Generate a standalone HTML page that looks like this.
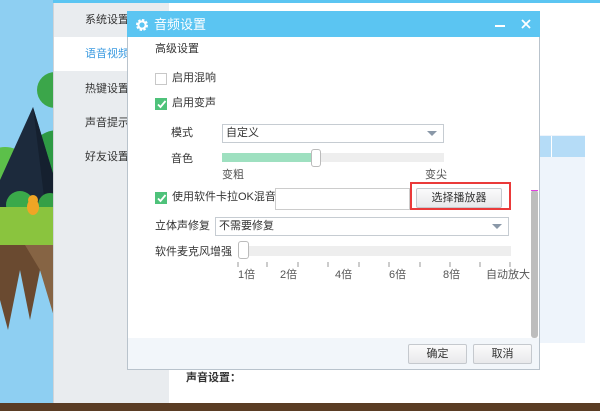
<!DOCTYPE html>
<html><head><meta charset="utf-8"><style>
*{margin:0;padding:0;box-sizing:border-box}
body{width:600px;height:411px;overflow:hidden;position:relative;background:#8ecff2;font-family:"Liberation Sans","Noto Sans CJK SC",sans-serif;font-size:11px;color:#333}
.a{position:absolute}
.t{position:absolute;white-space:nowrap;line-height:1}
.cb{position:absolute;width:12px;height:12px;border:1px solid #c8c8c8;background:#fff}
.cbg{background:#4ec27a;border-color:#4ec27a}
.sel{position:absolute;border:1px solid #c6ccd2;background:#fff}
.sel:after{content:"";position:absolute;right:6px;top:6px;border-left:5px solid transparent;border-right:5px solid transparent;border-top:5px solid #8a98a8}
.btn{position:absolute;border:1px solid #c5c9ce;border-radius:2px;background:linear-gradient(#fbfbfb,#e8e9eb);text-align:center;font-size:11px;color:#333}
</style></head><body>
<svg class="a" style="left:0;top:0" width="60" height="411">
<circle cx="5" cy="175" r="28" fill="#5cc04a"/>
<circle cx="55" cy="90" r="18" fill="#3ba64a"/>
<circle cx="58" cy="160" r="30" fill="#2e9a44"/>
<polygon points="33,107 0,180 0,210 58,210 58,190" fill="#1c2a3c"/>
<polygon points="33,107 58,190 45,205" fill="#15202f"/>
<circle cx="20" cy="205" r="14" fill="#3aa94a"/>
<circle cx="50" cy="205" r="12" fill="#35a046"/>
<rect x="0" y="207" width="60" height="40" fill="#8ac43e"/>
<polygon points="0,245 60,245 52,300 40,270 30,320 20,270 8,330 0,300" fill="#6a4a30"/>
<polygon points="25,245 60,245 55,320 40,270" fill="#866444"/>
<ellipse cx="33" cy="207" rx="6" ry="8" fill="#f0a525"/>
<circle cx="33" cy="200" r="5" fill="#f0a525"/>
</svg>
<div class="a" style="left:0;top:403px;width:600px;height:8px;background:#5a3c24"></div>
<!-- main window -->
<div class="a" style="left:53px;top:0;width:547px;height:403px;background:#fff;border-left:1px solid #d0d4d8"></div>
<div class="a" style="left:53px;top:0;width:547px;height:3px;background:#5bc5f2"></div>
<div class="a" style="left:54px;top:3px;width:115px;height:400px;background:#e9ecef"></div>
<div class="a" style="left:54px;top:37px;width:115px;height:34px;background:#fff"></div>
<div class="t" style="left:85px;top:15px;font-size:11px">系统设置</div>
<div class="t" style="left:85px;top:49px;font-size:11px;color:#3b9be0">语音视频</div>
<div class="t" style="left:85px;top:84px;font-size:11px">热键设置</div>
<div class="t" style="left:85px;top:118px;font-size:11px">声音提示</div>
<div class="t" style="left:85px;top:152px;font-size:11px">好友设置</div>
<div class="a" style="left:540px;top:135px;width:45px;height:208px;background:#eef4fb"></div>
<div class="a" style="left:540px;top:136px;width:45px;height:21px;background:#b5dcf7"></div>
<div class="a" style="left:551px;top:136px;width:1px;height:21px;background:#fff"></div>
<div class="t" style="left:186px;top:373px;font-weight:bold;font-size:11px">声音设置：</div>
<!-- dialog -->
<div class="a" style="left:127px;top:11px;width:413px;height:359px;background:#fff;border:1px solid #b9c3cc"></div>
<div class="a" style="left:127px;top:11px;width:413px;height:26px;background:#5bc5f2"></div>
<svg class="a" style="left:135px;top:18px" width="14" height="14" viewBox="0 0 14 14"><circle cx="7" cy="7" r="4.5" fill="none" stroke="#fff" stroke-width="3" stroke-dasharray="2.2 1.3"/><circle cx="7" cy="7" r="3.6" fill="none" stroke="#fff" stroke-width="2"/></svg>
<div class="t" style="left:154px;top:18px;font-size:13px;color:#fff">音频设置</div>
<div class="a" style="left:495px;top:25px;width:10px;height:2px;background:#fff"></div>
<svg class="a" style="left:521px;top:19px" width="10" height="10"><path d="M1 1L9 9M9 1L1 9" stroke="#fff" stroke-width="1.8"/></svg>
<div class="t" style="left:155px;top:44px">高级设置</div>
<div class="cb" style="left:155px;top:73px"></div>
<div class="t" style="left:172px;top:73px">启用混响</div>
<div class="cb cbg" style="left:155px;top:98px"></div>
<svg class="a" style="left:156px;top:99px" width="11" height="11"><path d="M2 5.5L4.5 8L9.5 2" stroke="#fff" stroke-width="1.8" fill="none"/></svg>
<div class="t" style="left:172px;top:98px">启用变声</div>
<div class="t" style="left:171px;top:128px">模式</div>
<div class="sel" style="left:222px;top:124px;width:222px;height:19px"></div>
<div class="t" style="left:226px;top:128px">自定义</div>
<div class="t" style="left:171px;top:154px">音色</div>
<div class="a" style="left:222px;top:153px;width:222px;height:9px;background:#eee"></div>
<div class="a" style="left:222px;top:153px;width:92px;height:9px;background:#9ee0c0"></div>
<div class="a" style="left:311px;top:149px;width:10px;height:18px;background:#fff;border:1px solid #bbb;border-radius:3px"></div>
<div class="t" style="left:222px;top:170px;color:#555">变粗</div>
<div class="t" style="left:425px;top:170px;color:#555">变尖</div>
<div class="cb cbg" style="left:155px;top:192px"></div>
<svg class="a" style="left:156px;top:193px" width="11" height="11"><path d="M2 5.5L4.5 8L9.5 2" stroke="#fff" stroke-width="1.8" fill="none"/></svg>
<div class="t" style="left:172px;top:192px">使用软件卡拉OK混音</div>
<div class="a" style="left:275px;top:188px;width:135px;height:22px;border:1px solid #ccc;background:#fff"></div>
<div class="btn" style="left:416px;top:188px;width:86px;height:20px;line-height:18px">选择播放器</div>
<div class="a" style="left:410px;top:182px;width:101px;height:28px;border:2px solid #ea3a3a"></div>
<div class="t" style="left:155px;top:221px">立体声修复</div>
<div class="sel" style="left:215px;top:217px;width:294px;height:19px"></div>
<div class="t" style="left:219px;top:221px">不需要修复</div>
<div class="t" style="left:155px;top:247px">软件麦克风增强</div>
<div class="a" style="left:238px;top:246px;width:273px;height:10px;background:#eee"></div>
<div class="a" style="left:238px;top:241px;width:11px;height:18px;background:#fff;border:1px solid #bbb;border-radius:3px"></div>
<svg class="a" style="left:236px;top:261px" width="280" height="8"><path d="M2 1v5M31 1v5M62 1v5M92 1v5M123 1v5M153 1v5M184 1v5M214 1v5M244 1v5M274 1v5" stroke="#999"/></svg>
<div class="t" style="left:238px;top:270px;color:#555">1倍</div>
<div class="t" style="left:280px;top:270px;color:#555">2倍</div>
<div class="t" style="left:335px;top:270px;color:#555">4倍</div>
<div class="t" style="left:389px;top:270px;color:#555">6倍</div>
<div class="t" style="left:443px;top:270px;color:#555">8倍</div>
<div class="t" style="left:486px;top:270px;color:#555">自动放大</div>
<div class="a" style="left:531px;top:190px;width:7px;height:148px;background:#bdbdbd;border-radius:3px"></div>
<div class="a" style="left:531px;top:190px;width:7px;height:1px;background:#e040e0"></div>
<div class="a" style="left:128px;top:338px;width:411px;height:31px;background:#f2f6fa"></div>
<div class="btn" style="left:408px;top:344px;width:59px;height:20px;line-height:18px">确定</div>
<div class="btn" style="left:473px;top:344px;width:59px;height:20px;line-height:18px">取消</div>
</body></html>
